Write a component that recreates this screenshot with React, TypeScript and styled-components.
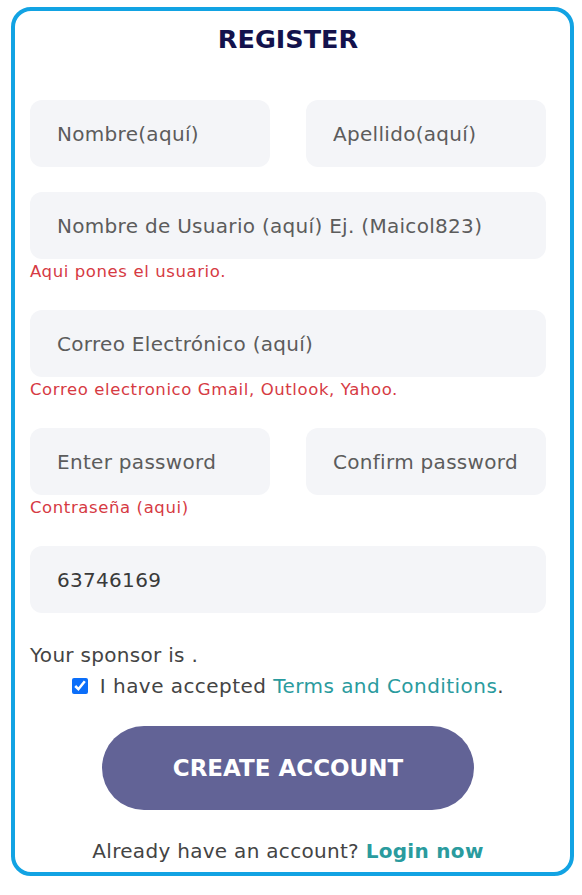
import React from "react";
import styled, { createGlobalStyle } from "styled-components";

const FONT = `"DejaVu Sans", "Open Sans", sans-serif`;

const GlobalStyle = createGlobalStyle`
  html, body { margin: 0; padding: 0; background: #ffffff; }
  body { font-family: ${FONT}; }
  * { box-sizing: border-box; }
`;

const Card = styled.div`
  margin: 7px 0 0 11px;
  width: 563px;
  height: 869px;
  border: 4px solid #12a3e3;
  border-radius: 20px;
  background: #fff;
  padding: 10px 24px 6px 15px;
  display: flex;
  flex-direction: column;
`;

const Title = styled.h1`
  margin: 0 0 43px;
  text-align: center;
  font-size: 25.5px;
  line-height: 36px;
  font-weight: 700;
  color: #13124c;
`;

const Row = styled.div<{ $cols: number }>`
  display: grid;
  grid-template-columns: repeat(${(p) => p.$cols}, 1fr);
  column-gap: 36px;
`;

const Group = styled.div`
  display: flex;
  flex-direction: column;
  margin-bottom: 25px;
`;

const Input = styled.input`
  width: 100%;
  height: 67px;
  border: none;
  outline: none;
  border-radius: 12px;
  background: #f4f5f8;
  padding: 0 27px;
  font-family: ${FONT};
  font-size: 20px;
  letter-spacing: 0.3px;
  color: #3a3a3a;
  &::placeholder { color: #5c5c5c; }
`;

const ErrorText = styled.div`
  font-size: 16.5px;
  letter-spacing: 0.6px;
  line-height: 26px;
  color: #d63a43;
`;

const Sponsor = styled.div`
  margin-top: 27px;
  font-size: 20px;
  letter-spacing: 0.3px;
  line-height: 30px;
  color: #444;
`;

const TermsRow = styled.label`
  display: flex;
  align-items: center;
  justify-content: center;
  gap: 12px;
  font-size: 20px;
  letter-spacing: 0.45px;
  line-height: 32px;
  color: #444;
`;

const Check = styled.input`
  width: 16px;
  height: 16px;
  margin: 0;
  accent-color: #0b6ef9;
`;

const Link = styled.a<{ $bold?: boolean }>`
  color: #2a9b9e;
  text-decoration: none;
  font-weight: ${(p) => (p.$bold ? 700 : 400)};
`;

const Button = styled.button`
  align-self: center;
  margin-top: 24px;
  width: 372px;
  height: 86px;
  border: none;
  border-radius: 43px;
  background: #626396;
  color: #fff;
  font-family: ${FONT};
  font-size: 23px;
  font-weight: 700;
`;

const Footer = styled.div`
  margin-top: 26px;
  text-align: center;
  font-size: 20px;
  letter-spacing: 0.3px;
  line-height: 30px;
  color: #444;
`;

export default function App() {
  return (
    <>
      <GlobalStyle />
      <Card>
        <Title>REGISTER</Title>
        <Row $cols={2}>
          <Group>
            <Input placeholder="Nombre(aquí)" />
          </Group>
          <Group>
            <Input placeholder="Apellido(aquí)" />
          </Group>
        </Row>
        <Group>
          <Input placeholder="Nombre de Usuario (aquí) Ej. (Maicol823)" />
          <ErrorText>Aqui pones el usuario.</ErrorText>
        </Group>
        <Group>
          <Input placeholder="Correo Electrónico (aquí)" />
          <ErrorText>Correo electronico Gmail, Outlook, Yahoo.</ErrorText>
        </Group>
        <Group>
          <Row $cols={2}>
            <Input type="password" placeholder="Enter password" />
            <Input type="password" placeholder="Confirm password" />
          </Row>
          <ErrorText>Contraseña (aqui)</ErrorText>
        </Group>
        <Row $cols={1}>
          <Input defaultValue="63746169" />
        </Row>
        <Sponsor>Your sponsor is .</Sponsor>
        <TermsRow>
          <Check type="checkbox" defaultChecked />
          <span>
            I have accepted <Link href="#">Terms and Conditions</Link>.
          </span>
        </TermsRow>
        <Button>CREATE ACCOUNT</Button>
        <Footer>
          Already have an account? <Link $bold href="#">Login now</Link>
        </Footer>
      </Card>
    </>
  );
}
